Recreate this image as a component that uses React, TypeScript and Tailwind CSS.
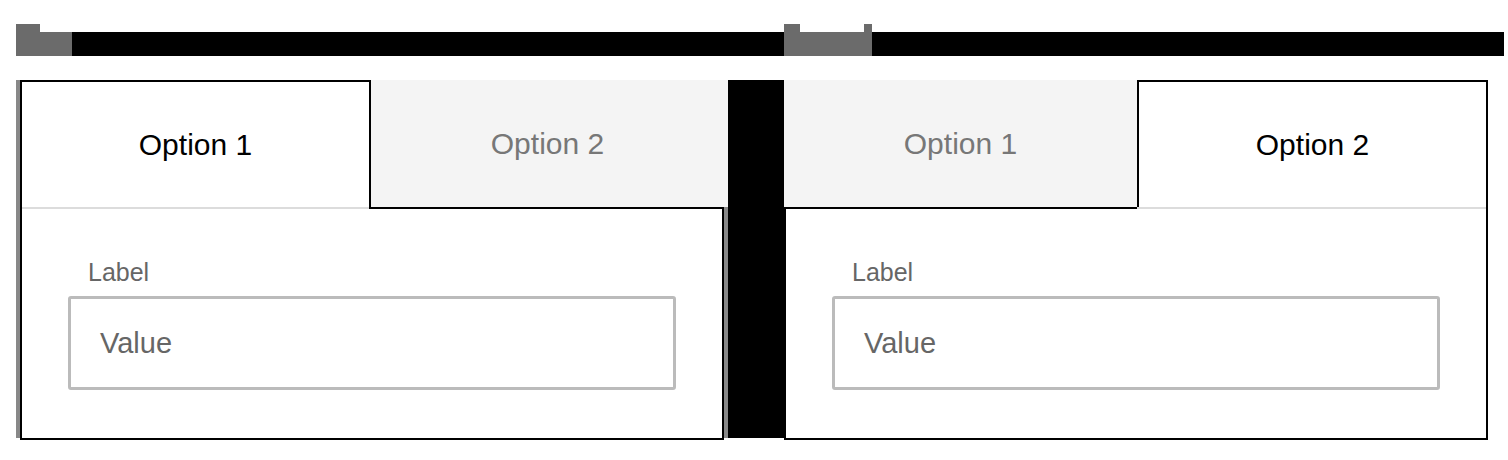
import React from 'react';

type TabPanelProps = {
  active: 0 | 1;
};

const Field: React.FC = () => (
  <div className="px-[46px] pt-[51px]">
    <div className="ml-[20px] text-[25px] leading-none text-[#666]">Label</div>
    <div className="mt-[11px] h-[94px] border-[3px] border-[#bbb] rounded-[3px] flex items-center pl-[29px]">
      <span className="text-[29px] leading-none text-[#666]">Value</span>
    </div>
  </div>
);

const TabPanel: React.FC<TabPanelProps> = ({ active }) => {
  const activeTab = (label: string, w: string) => (
    <div
      className={`${w} h-full bg-white border-2 border-b-0 border-black flex items-center justify-center`}
    >
      <span className="text-[30px] leading-none text-black">{label}</span>
    </div>
  );
  const idleTab = (label: string, w: string) => (
    <div className={`${w} h-full bg-[#f4f4f4] flex items-center justify-center`}>
      <span className="text-[30px] leading-none text-[#777]">{label}</span>
    </div>
  );

  return (
    <div className="w-[704px] h-full flex flex-col">
      <div className="h-[127px] flex">
        {active === 0 ? activeTab('Option 1', 'w-[351px]') : idleTab('Option 1', 'w-[353px]')}
        {active === 1 ? activeTab('Option 2', 'flex-1') : idleTab('Option 2', 'flex-1')}
      </div>
      <div className="flex-1 bg-white border-x-2 border-b-2 border-black">
        <div className="flex h-[2px]">
          {active === 0 ? (
            <>
              <div className="w-[347px] bg-[#dcdcdc]" />
              <div className="flex-1 bg-black" />
            </>
          ) : (
            <>
              <div className="w-[351px] bg-black" />
              <div className="flex-1 bg-[#dcdcdc]" />
            </>
          )}
        </div>
        <Field />
      </div>
    </div>
  );
};

export default function App() {
  return (
    <div
      className="w-[1508px] h-[460px] bg-white overflow-hidden"
      style={{ fontFamily: '"Liberation Sans", Arial, sans-serif' }}
    >
      {/* top caption bars */}
      <div className="mt-[24px] ml-[16px] flex h-[32px]">
        <div className="w-[56px] flex flex-col">
          <div className="w-[24px] h-[8px] bg-[#6b6b6b]" />
          <div className="h-[24px] bg-[#6b6b6b]" />
        </div>
        <div className="w-[712px] h-[24px] self-end bg-black" />
        <div className="w-[88px] flex flex-col">
          <div className="h-[8px] flex justify-between">
            <div className="w-[16px] bg-[#6b6b6b]" />
            <div className="w-[8px] bg-[#6b6b6b]" />
          </div>
          <div className="h-[24px] bg-[#6b6b6b]" />
        </div>
        <div className="w-[632px] h-[24px] self-end bg-black" />
      </div>

      {/* panels */}
      <div className="mt-[24px] ml-[16px] flex h-[360px]">
        <div className="w-[4px] h-[358px] bg-[#888]" />
        <TabPanel active={0} />
        <div className="w-[4px] h-[358px] flex flex-col">
          <div className="h-[127px] bg-[#f4f4f4]" />
          <div className="flex-1 bg-[#888]" />
        </div>
        <div className="w-[56px] h-[358px] bg-black" />
        <TabPanel active={1} />
      </div>
    </div>
  );
}
